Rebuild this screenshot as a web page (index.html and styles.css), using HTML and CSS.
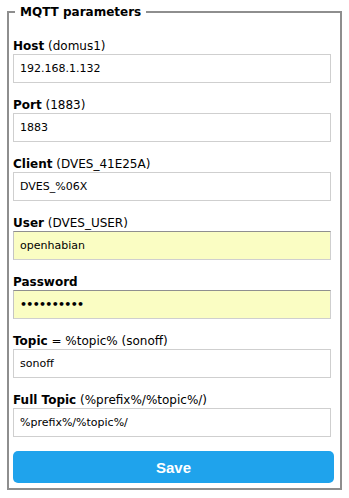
FILE: index.html
```html
<!DOCTYPE html>
<html lang="en">
<head>
    <meta charset="UTF-8">
    <meta name="viewport" content="width=device-width, initial-scale=1.0">
    <title>MQTT parameters</title>
    <link rel="stylesheet" href="styles.css">
</head>
<body>
    <form class="config">
        <fieldset>
            <legend>MQTT parameters</legend>

            <div class="field">
                <label for="mh"><b>Host</b> (domus1)</label>
                <input id="mh" type="text" value="192.168.1.132">
            </div>
            <div class="field">
                <label for="ml"><b>Port</b> (1883)</label>
                <input id="ml" type="text" value="1883">
            </div>
            <div class="field">
                <label for="mc"><b>Client</b> (DVES_41E25A)</label>
                <input id="mc" type="text" value="DVES_%06X">
            </div>
            <div class="field">
                <label for="mu"><b>User</b> (DVES_USER)</label>
                <input id="mu" class="autofill" type="text" value="openhabian">
            </div>
            <div class="field">
                <label for="mp"><b>Password</b></label>
                <input id="mp" class="autofill" type="password" value="openhabian">
            </div>
            <div class="field">
                <label for="mt"><b>Topic</b> = %topic% (sonoff)</label>
                <input id="mt" type="text" value="sonoff">
            </div>
            <div class="field">
                <label for="mf"><b>Full Topic</b> (%prefix%/%topic%/)</label>
                <input id="mf" type="text" value="%prefix%/%topic%/">
            </div>

            <button type="button" class="save">Save</button>
        </fieldset>
    </form>
</body>
</html>
```

FILE: styles.css
```css
body {
    font-family: "DejaVu Sans", Verdana, sans-serif;
    font-size: 12px;
    line-height: 16px;
    color: #000;
    background: #fff;
    margin: 0;
    padding: 4px 7px 0 7px;
}
fieldset {
    margin: 0;
    padding: 18px 6px 5px 4px;
    border: 2px solid #8e8e8e;
}
legend {
    font-weight: bold;
    margin-left: 2px;
    padding: 0 5px;
    line-height: 16px;
}
.field {
    margin-bottom: 14px;
}
.field label {
    display: block;
    height: 16px;
}
.field input {
    display: block;
    box-sizing: border-box;
    width: calc(100% - 3px);
    height: 29px;
    margin: 0;
    padding: 0 6px;
    border: 1px solid #cfcfcf;
    background: #fff;
    font-family: "DejaVu Sans", Verdana, sans-serif;
    font-size: 11px;
    color: #000;
    outline: none;
}
.field input.autofill {
    background: #fafdc3;
    border-top-color: #8f8f8f;
    border-left-color: #c4c4c4;
}
.field input[type="password"] {
    font-size: 11px;
    font-weight: bold;
    letter-spacing: -0.7px;
}
.save {
    display: block;
    width: 100%;
    height: 32px;
    margin: 0;
    border: 0;
    border-radius: 5px;
    background: #1fa3ec;
    color: #fff;
    font-family: "Liberation Sans", Arial, sans-serif;
    font-size: 15px;
    font-weight: bold;
}
```
